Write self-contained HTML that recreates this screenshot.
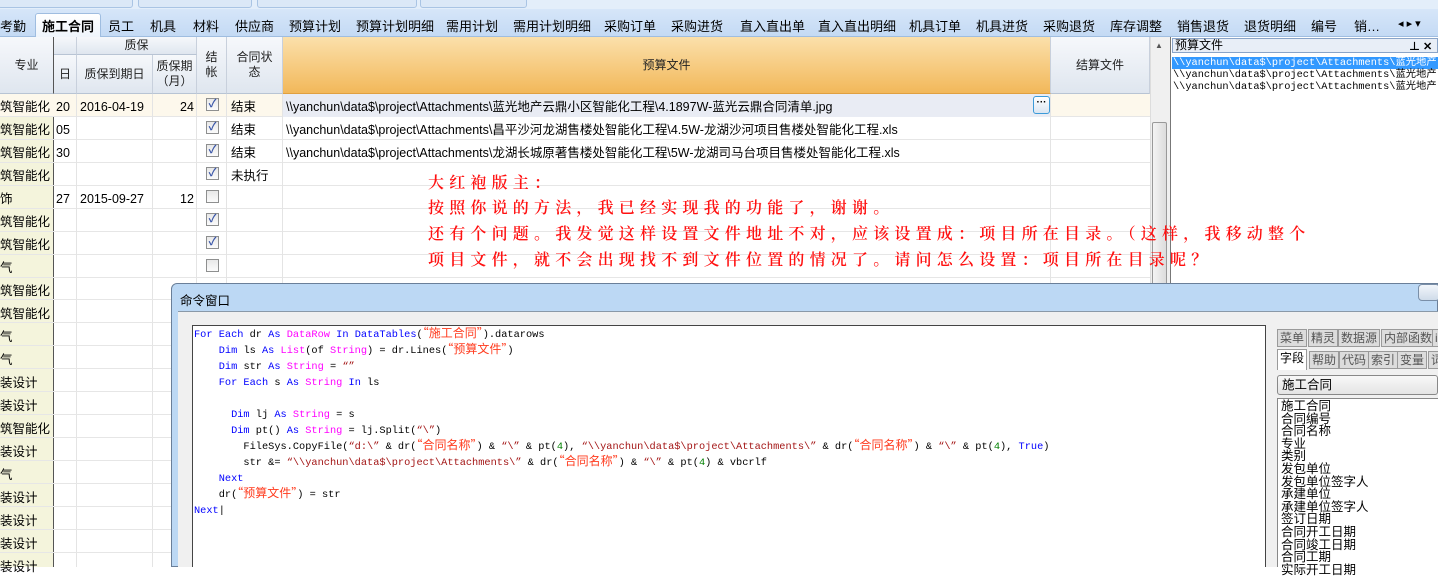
<!DOCTYPE html>
<html><head><meta charset="utf-8"><style>
*{margin:0;padding:0;box-sizing:border-box}
body{width:1438px;height:567px;overflow:hidden;position:relative;background:#fff;font-family:"Liberation Sans","Noto Sans CJK SC",sans-serif;font-size:12px;color:#000}
.a{position:absolute;white-space:nowrap}
.tb{position:absolute;top:-6px;height:14px;border:1px solid #a9c4e4;border-radius:3px;background:#dbe8f7}
.tabs{position:absolute;left:0;top:9px;width:1438px;height:28px;background:linear-gradient(#d6e6f9,#c4daf4);border-bottom:1px solid #9fbde0}
.tab{position:absolute;top:7px;font-size:13px}
.hd{position:absolute;background:linear-gradient(#f6f8fb,#dfe6ef);border-right:1px solid #c8d0dc;border-bottom:1px solid #b8c4d4;display:flex;align-items:center;justify-content:center;text-align:center;font-size:12px;line-height:15px;color:#222}
.row{position:absolute;left:0;width:1150px;height:23px;border-bottom:1px solid #e6e6e6}
.c{position:absolute;top:0;height:23px;line-height:23px;font-size:12.5px;border-right:1px solid #e4e4e4}
.cb{position:absolute;left:206px;top:5px;width:13px;height:13px;border:1px solid #8e8f8f;background:linear-gradient(#e8e8e8,#fbfbfb);font-size:11px;line-height:11px;text-align:center;color:#3a56a8;font-weight:bold}
.red{position:absolute;left:428px;color:#ff1010;font-family:"Noto Serif CJK SC",serif;font-size:16px;letter-spacing:5.2px;white-space:nowrap;font-weight:600}
.code{font-family:"Liberation Mono",monospace;font-size:10.3px;line-height:16px;white-space:pre;position:absolute;left:194px;top:327px}
.k{color:#0000ff}.t{color:#ff00ff}.s{color:#a31515}.z{color:#ff3b1e;font-family:"Noto Sans CJK SC",sans-serif;font-size:12px;line-height:10px}.n{color:#008000}
.rt{position:absolute;height:18px;border:1px solid #9a9a9a;background:#dcdcdc;font-size:12px;line-height:16px;padding:0 2px;color:#555}
</style></head><body>
<div class="a" style="left:0;top:0;width:1438px;height:9px;background:#e3eefa"></div>
<div class="tb" style="left:-2px;width:135px"></div>
<div class="tb" style="left:138px;width:114px"></div>
<div class="tb" style="left:257px;width:160px"></div>
<div class="tb" style="left:420px;width:107px"></div>
<div class="tabs">
<div class="tab" style="left:0">考勤</div>
<div class="a" style="left:35px;top:4px;width:66px;height:25px;background:linear-gradient(#fff,#eef4fb);border:1px solid #9fbde0;border-bottom:none;border-radius:3px 3px 0 0"></div>
<div class="tab" style="left:42px;font-weight:bold">施工合同</div>
<div class="tab" style="left:108px">员工</div>
<div class="tab" style="left:150px">机具</div>
<div class="tab" style="left:193px">材料</div>
<div class="tab" style="left:235px">供应商</div>
<div class="tab" style="left:289px">预算计划</div>
<div class="tab" style="left:356px">预算计划明细</div>
<div class="tab" style="left:446px">需用计划</div>
<div class="tab" style="left:513px">需用计划明细</div>
<div class="tab" style="left:604px">采购订单</div>
<div class="tab" style="left:671px">采购进货</div>
<div class="tab" style="left:740px">直入直出单</div>
<div class="tab" style="left:818px">直入直出明细</div>
<div class="tab" style="left:909px">机具订单</div>
<div class="tab" style="left:976px">机具进货</div>
<div class="tab" style="left:1043px">采购退货</div>
<div class="tab" style="left:1110px">库存调整</div>
<div class="tab" style="left:1177px">销售退货</div>
<div class="tab" style="left:1244px">退货明细</div>
<div class="tab" style="left:1311px">编号</div>
<div class="tab" style="left:1354px">销…</div>
<div class="tab" style="left:1398px;font-size:11px;top:8px">◂ ▸ ▾</div>
</div>
<div class="hd" style="left:0;top:37px;width:54px;height:57px;border-right:1px solid #555">专业</div>
<div class="hd" style="left:54px;top:37px;width:23px;height:18px"></div>
<div class="hd" style="left:77px;top:37px;width:120px;height:18px">质保</div>
<div class="hd" style="left:54px;top:55px;width:23px;height:39px">日</div>
<div class="hd" style="left:77px;top:55px;width:76px;height:39px">质保到期日</div>
<div class="hd" style="left:153px;top:55px;width:44px;height:39px">质保期<br>（月）</div>
<div class="hd" style="left:197px;top:37px;width:30px;height:57px">结<br>帐</div>
<div class="hd" style="left:227px;top:37px;width:56px;height:57px">合同状<br>态</div>
<div class="hd" style="left:283px;top:37px;width:768px;height:57px;background:linear-gradient(#fbe0ab,#f2b85a);border-bottom:1px solid #e0a040">预算文件</div>
<div class="hd" style="left:1051px;top:37px;width:99px;height:57px">结算文件</div>
<div class="a" style="left:0;top:94px;width:54px;height:473px;background:#f4f4dc;border-right:1px solid #555"></div>
<div class="row" style="top:94px;background:#fdf8ec"><div class="c" style="left:283px;width:768px;background:#e9ecf4"></div></div>
<div class="row" style="top:117px"></div><div class="row" style="top:140px"></div><div class="row" style="top:163px"></div><div class="row" style="top:186px"></div><div class="row" style="top:209px"></div><div class="row" style="top:232px"></div><div class="row" style="top:255px"></div>
<div class="a" style="left:76px;top:94px;width:1px;height:473px;background:#e4e4e4"></div>
<div class="a" style="left:152px;top:94px;width:1px;height:473px;background:#e4e4e4"></div>
<div class="a" style="left:196px;top:94px;width:1px;height:473px;background:#e4e4e4"></div>
<div class="a" style="left:226px;top:94px;width:1px;height:473px;background:#e4e4e4"></div>
<div class="a" style="left:282px;top:94px;width:1px;height:473px;background:#e4e4e4"></div>
<div class="a" style="left:1050px;top:94px;width:1px;height:473px;background:#e4e4e4"></div>
<div class="a" style="left:0;top:277px;width:172px;height:290px;background:repeating-linear-gradient(transparent 0 22px,#e6e6e6 22px 23px)"></div>
<div class="a" style="left:0;top:96px;font-size:12.5px;line-height:23px;white-space:pre">筑智能化
筑智能化
筑智能化
筑智能化
饰
筑智能化
筑智能化
气
筑智能化
筑智能化
气
气
装设计
装设计
筑智能化
装设计
气
装设计
装设计
装设计
装设计</div>
<div class="a" style="left:56px;top:96px;font-size:12.5px;line-height:23px;white-space:pre">20
05
30

27</div>
<div class="a" style="left:80px;top:96px;font-size:12.5px;line-height:23px">2016-04-19</div>
<div class="a" style="left:80px;top:188px;font-size:12.5px;line-height:23px">2015-09-27</div>
<div class="a" style="left:180px;top:96px;font-size:12.5px;line-height:23px">24</div>
<div class="a" style="left:180px;top:188px;font-size:12.5px;line-height:23px">12</div>
<div class="cb" style="top:98px">✓</div><div class="cb" style="top:121px">✓</div><div class="cb" style="top:144px">✓</div><div class="cb" style="top:167px">✓</div><div class="cb" style="top:190px"></div><div class="cb" style="top:213px">✓</div><div class="cb" style="top:236px">✓</div><div class="cb" style="top:259px"></div>
<div class="a" style="left:231px;top:96px;font-size:12.5px;line-height:23px;white-space:pre">结束
结束
结束
未执行</div>
<div class="a" style="left:286px;top:96px;font-size:12.5px;line-height:23px;white-space:pre">\\yanchun\data$\project\Attachments\蓝光地产云鼎小区智能化工程\4.1897W-蓝光云鼎合同清单.jpg
\\yanchun\data$\project\Attachments\昌平沙河龙湖售楼处智能化工程\4.5W-龙湖沙河项目售楼处智能化工程.xls
\\yanchun\data$\project\Attachments\龙湖长城原著售楼处智能化工程\5W-龙湖司马台项目售楼处智能化工程.xls</div>
<div class="a" style="left:1033px;top:96px;width:17px;height:18px;border:1px solid #3c9ad8;border-radius:3px;background:linear-gradient(#fff,#dbe6f2);font-size:10px;line-height:12px;text-align:center;font-weight:bold">···</div>
<div class="a" style="left:1150px;top:37px;width:20px;height:250px;background:#f0f0f0;border-left:1px solid #ddd"></div>
<div class="a" style="left:1155px;top:41px;font-size:8px;color:#555">▲</div>
<div class="a" style="left:1152px;top:122px;width:15px;height:165px;border:1px solid #999;border-radius:2px;background:linear-gradient(90deg,#f4f4f4,#dcdcdc)"></div>
<div class="a" style="left:1170px;top:37px;width:268px;height:250px;background:#fff;border-left:1px solid #777"></div>
<div class="a" style="left:1172px;top:38px;width:266px;height:15px;border:1px solid #8aa4c8;background:#e8eef7;font-size:12px;line-height:13px;padding-left:2px">预算文件</div>
<div class="a" style="left:1409px;top:38px;font-size:11px;font-weight:bold">⊥ ✕</div>
<div class="a" style="left:1172px;top:57px;width:266px;height:12px;background:#3399ff"></div>
<div class="a" style="left:1173px;top:57px;font-family:'Liberation Mono','Noto Sans CJK SC',monospace;font-size:10.3px;line-height:12px;white-space:pre"><span style="color:#fff">\\yanchun\data$\project\Attachments\蓝光地产</span>
\\yanchun\data$\project\Attachments\蓝光地产
\\yanchun\data$\project\Attachments\蓝光地产</div>
<div class="red" style="top:170px">大红袍版主：</div>
<div class="red" style="top:195px">按照你说的方法，我已经实现我的功能了，谢谢。</div>
<div class="red" style="top:221px">还有个问题。我发觉这样设置文件地址不对，应该设置成：项目所在目录。（这样，我移动整个</div>
<div class="red" style="top:247px">项目文件，就不会出现找不到文件位置的情况了。请问怎么设置：项目所在目录呢？</div>
<div class="a" style="left:171px;top:283px;width:1267px;height:284px;background:#bcd8f4;border:1px solid #6a7f99;border-radius:6px 0 0 0"></div>
<div class="a" style="left:180px;top:290px;font-size:12.5px">命令窗口</div>
<div class="a" style="left:1418px;top:284px;width:22px;height:17px;border:1px solid #7a8fa8;border-radius:4px;background:linear-gradient(#f2f6fb,#cfdbe9)"></div>
<div class="a" style="left:178px;top:311px;width:1260px;height:256px;background:#f0f0f0;border-top:1px solid #8a99a8"></div>
<div class="a" style="left:192px;top:325px;width:1074px;height:242px;background:#fff;border:1px solid #444;border-width:1px 1px 0 1px"></div>
<div class="code"><span class="k">For Each</span> dr <span class="k">As</span> <span class="t">DataRow</span> <span class="k">In</span> <span class="k">DataTables</span>(<span class="z">“施工合同”</span>).datarows
    <span class="k">Dim</span> ls <span class="k">As</span> <span class="t">List</span>(of <span class="t">String</span>) = dr.Lines(<span class="z">“预算文件”</span>)
    <span class="k">Dim</span> str <span class="k">As</span> <span class="t">String</span> = <span class="s">“”</span>
    <span class="k">For Each</span> s <span class="k">As</span> <span class="t">String</span> <span class="k">In</span> ls

      <span class="k">Dim</span> lj <span class="k">As</span> <span class="t">String</span> = s
      <span class="k">Dim</span> pt() <span class="k">As</span> <span class="t">String</span> = lj.Split(<span class="s">“\”</span>)
        FileSys.CopyFile(<span class="s">“d:\”</span> &amp; dr(<span class="z">“合同名称”</span>) &amp; <span class="s">“\”</span> &amp; pt(<span class="n">4</span>), <span class="s">“\\yanchun\data$\project\Attachments\”</span> &amp; dr(<span class="z">“合同名称”</span>) &amp; <span class="s">“\”</span> &amp; pt(<span class="n">4</span>), <span class="k">True</span>)
        str &amp;= <span class="s">“\\yanchun\data$\project\Attachments\”</span> &amp; dr(<span class="z">“合同名称”</span>) &amp; <span class="s">“\”</span> &amp; pt(<span class="n">4</span>) &amp; vbcrlf
    <span class="k">Next</span>
    dr(<span class="z">“预算文件”</span>) = str
<span class="k">Next</span>|</div>
<div class="rt" style="left:1277px;top:329px">菜单</div>
<div class="rt" style="left:1308px;top:329px">精灵</div>
<div class="rt" style="left:1338px;top:329px">数据源</div>
<div class="rt" style="left:1381px;top:329px">内部函数</div>
<div class="rt" style="left:1432px;top:329px">i</div>
<div class="rt" style="left:1277px;top:349px;background:#fff;color:#000;border-bottom:none;height:21px">字段</div>
<div class="rt" style="left:1309px;top:351px">帮助</div>
<div class="rt" style="left:1339px;top:351px">代码</div>
<div class="rt" style="left:1368px;top:351px">索引</div>
<div class="rt" style="left:1397px;top:351px">变量</div>
<div class="rt" style="left:1428px;top:351px">词</div>
<div class="a" style="left:1277px;top:375px;width:161px;height:20px;border:1px solid #888;border-radius:3px;background:linear-gradient(#f8f8f8,#e4e4e4);font-size:12.5px;line-height:18px;padding-left:4px">施工合同</div>
<div class="a" style="left:1277px;top:398px;width:161px;height:169px;background:#fff;border:1px solid #888;border-width:1px 0 0 1px"></div>
<div class="a" style="left:1281px;top:400px;font-size:12.5px;line-height:12.6px;white-space:pre">施工合同
合同编号
合同名称
专业
类别
发包单位
发包单位签字人
承建单位
承建单位签字人
签订日期
合同开工日期
合同竣工日期
合同工期
实际开工日期</div>
</body></html>
